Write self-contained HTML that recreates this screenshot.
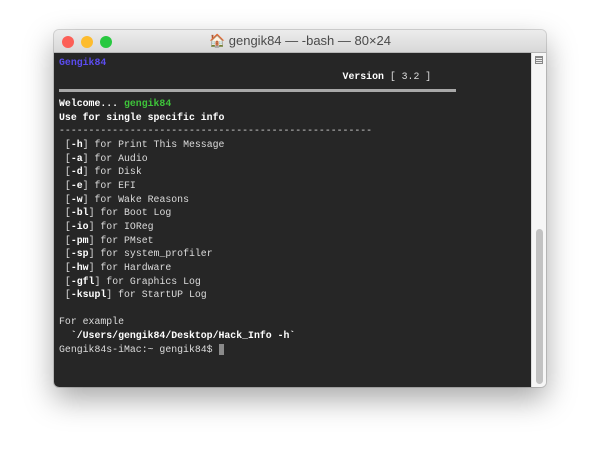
<!DOCTYPE html><html><head><style>
body{margin:0;width:600px;height:465px;background:#fff;position:relative;overflow:hidden;font-family:"Liberation Sans",sans-serif}
.win{position:absolute;left:54px;top:30px;width:492px;height:357px;border-radius:5px;box-shadow:0 12px 30px rgba(0,0,0,.35),0 0 0 1px rgba(0,0,0,.15);background:#ececec;overflow:hidden}
.tb{height:22px;background:linear-gradient(#ececec,#d8d8d8);border-bottom:1px solid #b5b5b5;position:relative;text-align:center;font-size:13px;line-height:22px;color:#4a4a4a}
.dot{position:absolute;top:6px;width:12px;height:12px;border-radius:50%}
.term{position:absolute;left:0;top:23px;width:477px;height:334px;background:#262626}
.sb{position:absolute;left:477px;top:23px;width:15px;height:334px;background:#f6f6f6;border-left:1px solid #ddd}
.th{position:absolute;left:4px;top:176px;width:7px;height:155px;border-radius:4px;background:#c2c2c2}
pre{margin:0;position:absolute;left:5px;top:3px;font-family:"Liberation Mono",monospace;font-size:9.85px;line-height:13.65px;color:#dcdcdc}
b{color:#fff}
.bar{position:absolute;left:5px;top:36px;width:397px;height:3px;background:#a8a8a8}
</style></head><body>
<div class="win">
<div class="tb"><span class="dot" style="left:8px;background:#fc5f57"></span><span class="dot" style="left:27px;background:#fdbc2e"></span><span class="dot" style="left:46px;background:#28c840"></span>🏠 gengik84 — -bash — 80×24</div>
<div class="term">
<pre><b style="color:#5b4cf0">Gengik84</b>
<b>                                                Version</b> [ 3.2 ]

<b>Welcome... </b><b style="color:#3ec43a">gengik84</b>
<b>Use for single specific info</b>
-----------------------------------------------------
 [<b>-h</b>] for Print This Message
 [<b>-a</b>] for Audio
 [<b>-d</b>] for Disk
 [<b>-e</b>] for EFI
 [<b>-w</b>] for Wake Reasons
 [<b>-bl</b>] for Boot Log
 [<b>-io</b>] for IOReg
 [<b>-pm</b>] for PMset
 [<b>-sp</b>] for system_profiler
 [<b>-hw</b>] for Hardware
 [<b>-gfl</b>] for Graphics Log
 [<b>-ksupl</b>] for StartUP Log

For example
<b>  `/Users/gengik84/Desktop/Hack_Info -h`</b>
Gengik84s-iMac:~ gengik84$ <span style="background:#8a8a8a">&nbsp;</span></pre>
<div class="bar"></div>
</div>
<div class="sb"><div style="position:absolute;left:3px;top:3px;width:8px;height:8px;border:1px solid #888;box-sizing:border-box;background:repeating-linear-gradient(#888 0 1px,#eee 1px 2px)"></div><div class="th"></div></div>
</div>
</body></html>
